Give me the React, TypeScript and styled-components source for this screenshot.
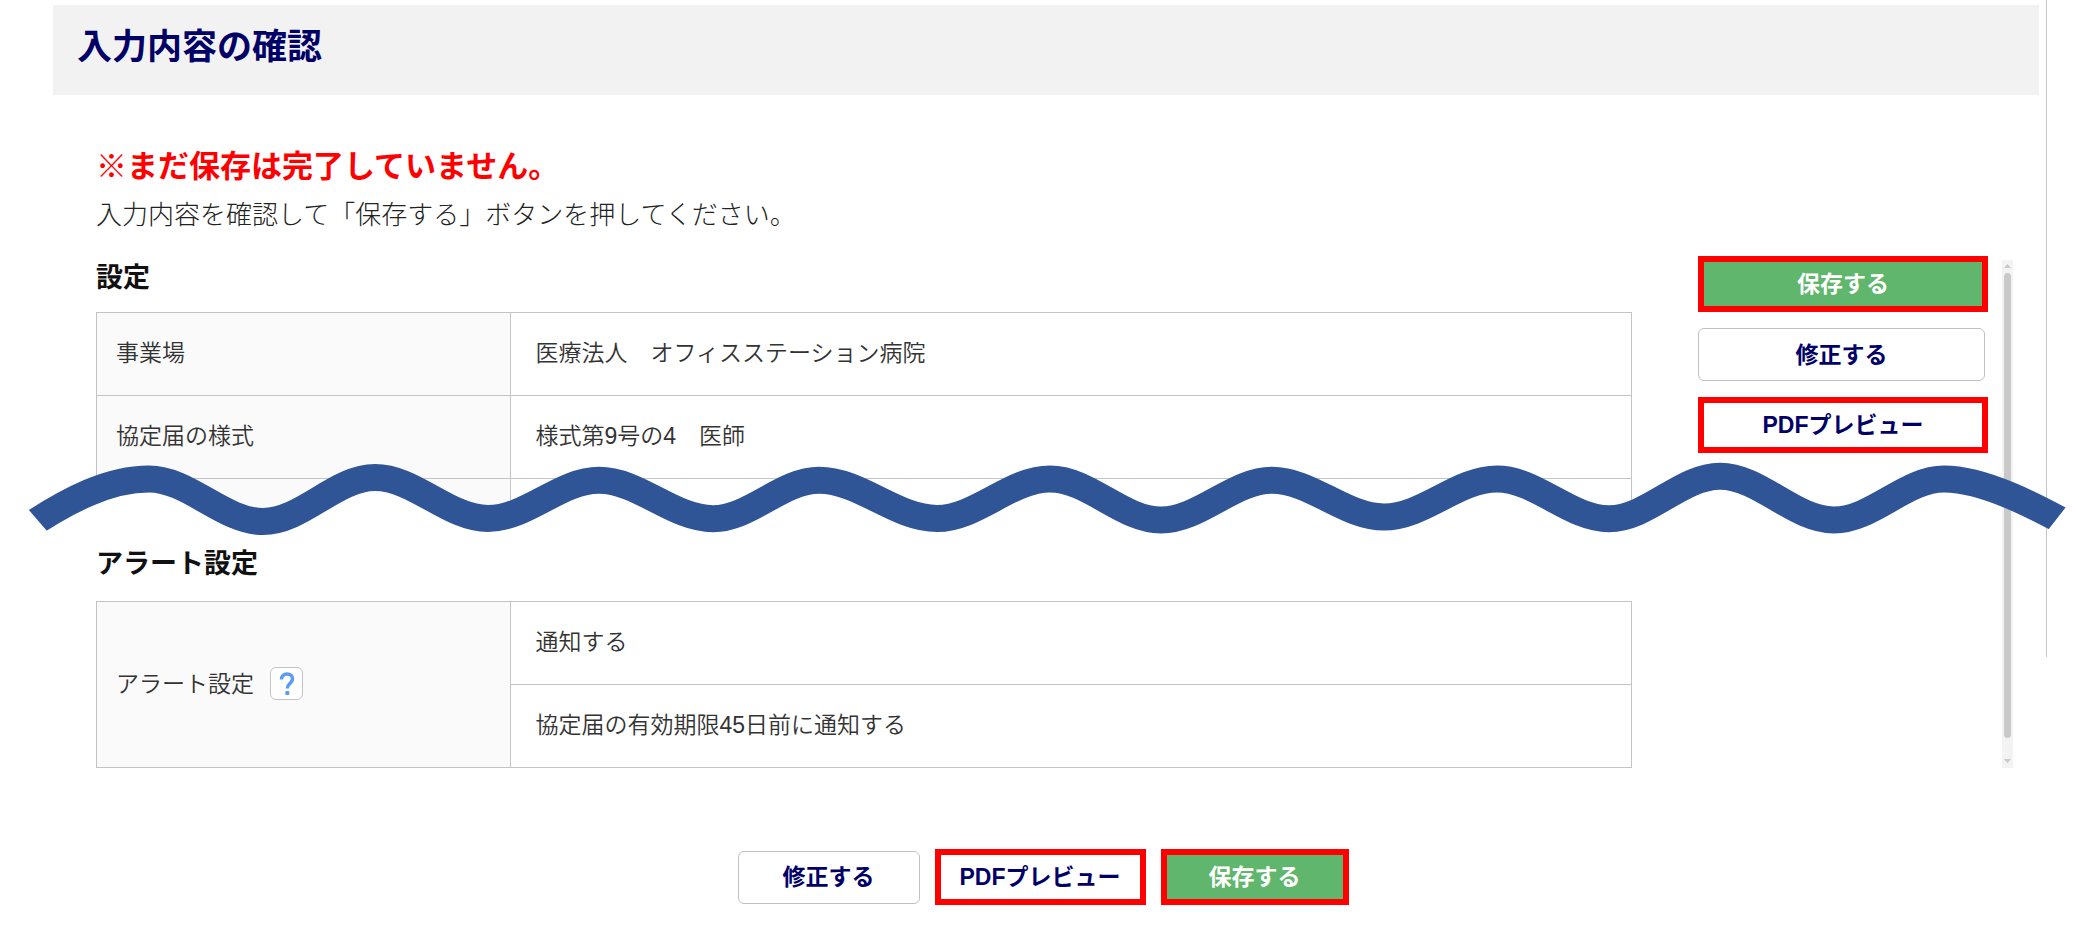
import React from "react";
import styled, { createGlobalStyle, css } from "styled-components";

const GlobalStyle = createGlobalStyle`
  *, *::before, *::after { box-sizing: border-box; }
  body {
    margin: 0;
    background: #fff;
    color: #333;
    font-family: "Liberation Sans", "Noto Sans CJK JP", sans-serif;
    font-size: 23px;
    line-height: 32px;
  }
`;

const Page = styled.div`
  display: flex;
  align-items: flex-start;
  padding-right: 32px;
`;

const Main = styled.main`
  flex: 1;
  min-width: 0;
  padding: 5px 7px 24px 53px;
`;

const Divider = styled.div`
  width: 1px;
  height: 657px;
  background: #c6c6c6;
`;

const TitleBar = styled.header`
  background: #f2f2f2;
  padding: 18px 24px 24px;
`;

const Title = styled.h1`
  margin: 0;
  color: #000066;
  font-size: 35px;
  line-height: 48px;
`;

const Notice = styled.div`
  padding: 48px 43px 21px;
`;

const Warning = styled.p`
  margin: 0;
  color: #ff0000;
  font-size: 31px;
  line-height: 48px;
  font-weight: 700;
`;

const Guide = styled.p`
  margin: 4px 0 0;
  color: #222;
  font-size: 26px;
  font-weight: 300;
  line-height: 40px;
`;

const Body = styled.div`
  display: flex;
  padding: 0 26px 0 43px;
`;

const Sections = styled.div`
  flex: 1;
  min-width: 0;
  margin-right: 66px;
`;

const SectionTitle = styled.h2`
  margin: 0;
  padding: 2px 0 14px;
  color: #111;
  font-size: 27px;
  line-height: 40px;
`;

const Table = styled.table`
  width: 100%;
  border-collapse: collapse;
  table-layout: fixed;
`;

const cell = css`
  border: 1px solid #c4c4c4;
  text-align: left;
  font-weight: 350;
`;

const HeadCell = styled.th`
  ${cell}
  width: 27%;
  padding: 0 19px 2px;
  background: #fafafa;
`;

const DataCell = styled.td`
  ${cell}
  padding: 0 24px 2px;
`;

const Row = styled.tr<{ $cut?: boolean }>`
  height: ${(p) => (p.$cut ? 36 : 83)}px;
`;

const HelpLabel = styled.div`
  display: flex;
  align-items: center;
  gap: 16px;
`;

const HelpButton = styled.button`
  display: flex;
  align-items: center;
  justify-content: center;
  width: 33px;
  height: 33px;
  padding: 0;
  border: 1px solid #c4c4c4;
  border-radius: 6px;
  background: #fff;
`;

const AlertSection = styled.section`
  padding-top: 27px;

  ${SectionTitle} {
    padding-bottom: 17px;
  }
`;

const Break = styled.svg`
  position: absolute;
  left: 0;
  top: 450px;
  width: 100%;
  height: 100px;
  pointer-events: none;
`;

const Side = styled.aside`
  display: flex;
  flex-direction: column;
  gap: 16px;
  width: 290px;
`;

const Button = styled.button<{ $marked?: boolean; $primary?: boolean; $wide?: boolean }>`
  height: ${(p) => (p.$marked ? 56 : 53)}px;
  padding: 0 ${(p) => (p.$wide ? 0 : p.$primary ? 42 : p.$marked ? 19 : 44)}px;
  margin-right: ${(p) => (p.$wide && !p.$marked ? 3 : 0)}px;
  border: ${(p) => (p.$marked ? "6px solid #ff0000" : "1px solid #c0c0c0")};
  border-radius: ${(p) => (p.$marked ? 0 : 6)}px;
  background: ${(p) => (p.$primary ? "#5fb66c" : "#fff")};
  color: ${(p) => (p.$primary ? "#fff" : "#000066")};
  font: inherit;
  font-weight: 700;
  white-space: nowrap;
`;

const ScrollTrack = styled.div`
  display: flex;
  flex-direction: column;
  align-items: center;
  width: 11px;
  margin: 4px 0 0 14px;
  padding: 4px 2px 5px;
  background: #f3f3f3;
`;

const ScrollThumb = styled.div`
  flex: 1;
  width: 7px;
  margin: 5px 0 21px;
  border-radius: 4px;
  background: #c9c9c9;
`;

const Actions = styled.div`
  display: flex;
  justify-content: center;
  align-items: center;
  gap: 15px;
  padding: 81px 6px 0 0;
`;

const peaks: [number, number][] = [
  [149, 29], [263, 71.5], [375, 27.5], [488, 68.5], [599, 30.3], [713, 68.7],
  [819, 30.3], [937, 68.5], [1050, 29], [1161, 70], [1272, 30.3], [1384, 67],
  [1497, 29], [1609, 68.7], [1720, 26.2], [1834, 70], [1944, 29],
];

const wave =
  "M20 82C70 48 110 29 149 29" +
  peaks
    .slice(1)
    .map(([x, y], i) => {
      const [px, py] = peaks[i];
      const d = (x - px) * 0.35;
      return `C${px + d} ${py} ${x - d} ${y} ${x} ${y}`;
    })
    .join("") +
  "C1984 29 2035 56 2075 78";

function WaveBreak() {
  return (
    <Break viewBox="0 0 2079 100" preserveAspectRatio="none" aria-hidden="true">
      <defs>
        <clipPath id="wave-ends">
          <path d="M28 59V0H2066V57L2048 80V100H47V81Z" />
        </clipPath>
        <clipPath id="table-area">
          <path d="M60 0H1660V100H60Z" />
        </clipPath>
      </defs>
      <path d={wave + "V92H20Z"} fill="#fff" clipPath="url(#table-area)" />
      <path d={wave} fill="none" stroke="#2f5597" strokeWidth="27" clipPath="url(#wave-ends)" />
    </Break>
  );
}

export default function App() {
  return (
    <>
      <GlobalStyle />
      <Page>
        <Main>
          <TitleBar>
            <Title>入力内容の確認</Title>
          </TitleBar>
          <Notice>
            <Warning>※まだ保存は完了していません。</Warning>
            <Guide>入力内容を確認して「保存する」ボタンを押してください。</Guide>
          </Notice>
          <Body>
            <Sections>
              <section>
                <SectionTitle>設定</SectionTitle>
                <Table>
                  <tbody>
                    <Row>
                      <HeadCell scope="row">事業場</HeadCell>
                      <DataCell>医療法人　オフィスステーション病院</DataCell>
                    </Row>
                    <Row>
                      <HeadCell scope="row">協定届の様式</HeadCell>
                      <DataCell>様式第9号の4　医師</DataCell>
                    </Row>
                    <Row $cut>
                      <HeadCell />
                      <DataCell />
                    </Row>
                  </tbody>
                </Table>
              </section>
              <AlertSection>
                <SectionTitle>アラート設定</SectionTitle>
                <Table>
                  <tbody>
                    <Row>
                      <HeadCell scope="rowgroup" rowSpan={2}>
                        <HelpLabel>
                          アラート設定
                          <HelpButton type="button" aria-label="ヘルプ">
                            <svg width="16" height="24" viewBox="0 0 16 24" fill="none">
                              <path
                                d="M2.500 7.500C2.500 4 4.800 2 8 2C11.300 2 13.500 4 13.500 7C13.500 11 8.300 11.500 8.300 16.500"
                                stroke="#5a9cf0"
                                strokeWidth="3.500"
                              />
                              <rect x="6.300" y="19" width="4" height="4" rx="1" fill="#5a9cf0" />
                            </svg>
                          </HelpButton>
                        </HelpLabel>
                      </HeadCell>
                      <DataCell>通知する</DataCell>
                    </Row>
                    <Row>
                      <DataCell>協定届の有効期限45日前に通知する</DataCell>
                    </Row>
                  </tbody>
                </Table>
              </AlertSection>
            </Sections>
            <Side>
              <Button type="button" $marked $primary $wide>保存する</Button>
              <Button type="button" $wide>修正する</Button>
              <Button type="button" $marked $wide>PDFプレビュー</Button>
            </Side>
            <ScrollTrack aria-hidden="true">
              <svg width="7" height="4" viewBox="0 0 7 4">
                <path d="M0 4L3.500 0L7 4Z" fill="#c9c9c9" />
              </svg>
              <ScrollThumb />
              <svg width="7" height="4" viewBox="0 0 7 4">
                <path d="M0 0L3.500 4L7 0Z" fill="#c9c9c9" />
              </svg>
            </ScrollTrack>
          </Body>
          <Actions>
            <Button type="button">修正する</Button>
            <Button type="button" $marked>PDFプレビュー</Button>
            <Button type="button" $marked $primary>保存する</Button>
          </Actions>
        </Main>
        <Divider />
      </Page>
      <WaveBreak />
    </>
  );
}
